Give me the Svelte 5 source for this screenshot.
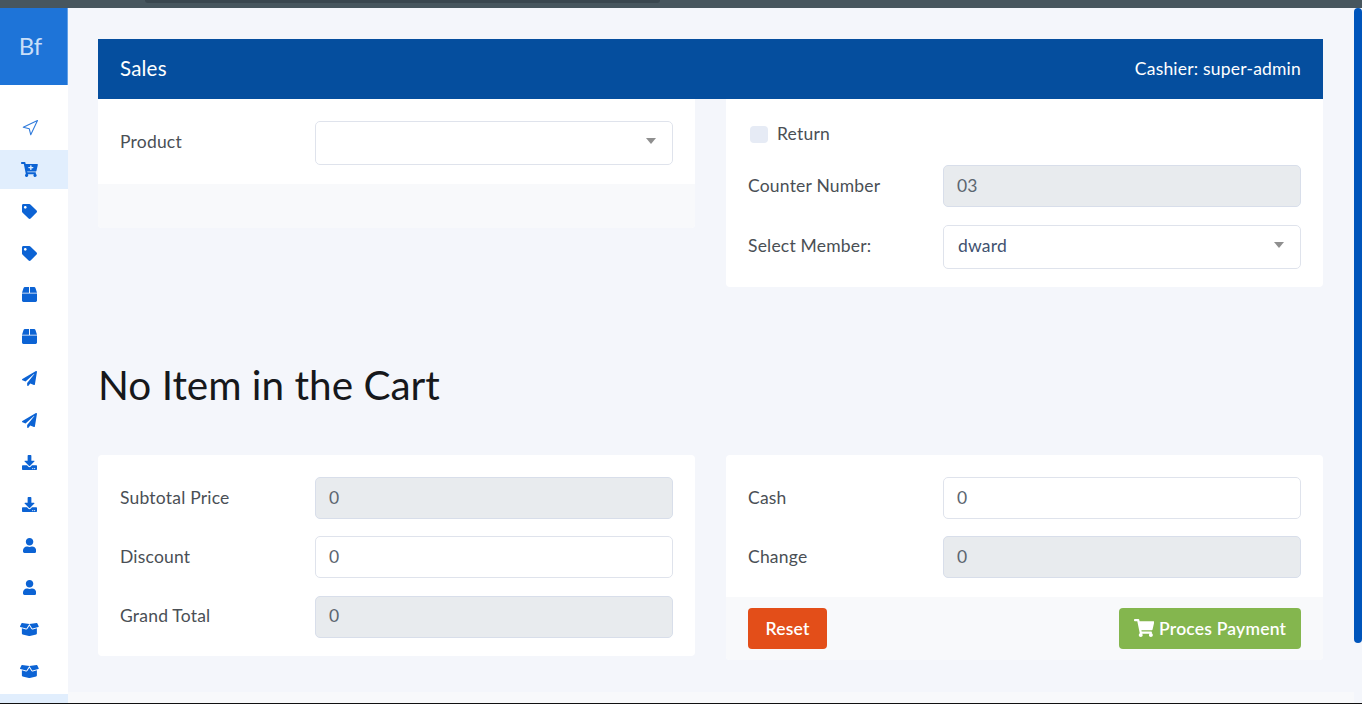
<script lang="ts">
	const icons = {
		tag: { box: '0 0 512 512', d: 'M0 252.118V48C0 21.49 21.49 0 48 0h204.118a48 48 0 0 1 33.941 14.059l211.882 211.882c18.745 18.745 18.745 49.137 0 67.882L293.823 497.941c-18.745 18.745-49.137 18.745-67.882 0L14.059 286.059A48 48 0 0 1 0 252.118zM112 64c-26.51 0-48 21.49-48 48s21.49 48 48 48 48-21.49 48-48-21.49-48-48-48z' },
		cartPlus: { box: '0 0 576 512', d: 'M504.717 320H211.572l6.545 32h268.418c15.401 0 26.816 14.301 23.403 29.319l-5.517 24.276C523.112 414.668 536 433.828 536 456c0 31.202-25.519 56.573-56.834 55.994-29.835-.552-54.371-24.764-55.154-54.594-.428-16.295 6.101-31.061 16.889-41.4H231.1c10.444 10.162 16.9 24.387 16.9 40 0 31.776-26.401 57.42-58.404 56-28.691-1.27-52.126-24.42-53.564-53.103-1.11-22.157 10.535-41.688 28.237-51.897L96.53 64H24C10.745 64 0 53.255 0 40V24C0 10.745 10.745 0 24 0h102.529c11.401 0 21.228 8.021 23.513 19.19L159.208 64H551.99c15.401 0 26.816 14.301 23.403 29.319l-47.273 208C525.637 312.246 515.923 320 504.717 320zM408 168h-48v-40c0-8.837-7.163-16-16-16h-16c-8.837 0-16 7.163-16 16v40h-48c-8.837 0-16 7.163-16 16v16c0 8.837 7.163 16 16 16h48v40c0 8.837 7.163 16 16 16h16c8.837 0 16-7.163 16-16v-40h48c8.837 0 16-7.163 16-16v-16c0-8.837-7.163-16-16-16z' },
		box: { box: '0 0 512 512', d: 'M509.5 184.6L458.9 32.8C452.4 13.2 434.1 0 413.4 0H272v192h238.7c-.4-2.5-.4-5-1.2-7.4zM240 0H98.6c-20.7 0-39 13.2-45.5 32.8L2.5 184.6c-.8 2.4-.8 4.9-1.2 7.4H240V0zM0 224v240c0 26.5 21.5 48 48 48h416c26.5 0 48-21.5 48-48V224H0z' },
		plane: { box: '0 0 512 512', d: 'M476 3.2L12.5 270.6c-18.1 10.4-15.8 35.6 2.2 43.2L121 358.4l287.3-253.2c5.5-4.9 13.3 2.6 8.6 8.3L176 407v80.5c0 23.6 28.5 32.9 42.5 15.8L282 426l124.6 52.2c14.2 6 30.4-2.9 33-18.2l72-432C515 7.8 493.3-6.8 476 3.2z' },
		download: { box: '0 0 512 512', d: 'M216 0h80c13.3 0 24 10.7 24 24v168h87.7c17.8 0 26.7 21.5 14.1 34.1L269.7 378.3c-7.5 7.5-19.8 7.5-27.3 0L90.1 226.1c-12.6-12.6-3.7-34.1 14.1-34.1H192V24c0-13.3 10.7-24 24-24zm296 376v112c0 13.3-10.7 24-24 24H24c-13.3 0-24-10.7-24-24V376c0-13.3 10.7-24 24-24h146.7l49 49c20.1 20.1 52.5 20.1 72.6 0l49-49H488c13.3 0 24 10.7 24 24zm-124 88c0-11-9-20-20-20s-20 9-20 20 9 20 20 20 20-9 20-20zm64 0c0-11-9-20-20-20s-20 9-20 20 9 20 20 20 20-9 20-20z' },
		user: { box: '0 0 448 512', d: 'M224 256c70.7 0 128-57.3 128-128S294.7 0 224 0 96 57.3 96 128s57.3 128 128 128zm89.6 32h-16.7c-22.2 10.2-46.9 16-72.9 16s-50.6-5.8-72.9-16h-16.7C60.2 288 0 348.2 0 422.4V464c0 26.5 21.5 48 48 48h352c26.5 0 48-21.5 48-48v-41.6c0-74.2-60.2-134.4-134.4-134.4z' },
		boxOpen: { box: '0 0 640 512', d: 'M425.7 256c-16.9 0-32.8-9-41.4-23.4L320 126l-64.2 106.6c-8.7 14.5-24.6 23.5-41.5 23.5-4.5 0-9-.6-13.3-1.9L64 215v178c0 14.7 10 27.5 24.2 31l216.2 54.1c10.2 2.5 20.9 2.5 31 0L551.8 424c14.2-3.6 24.2-16.4 24.2-31V215l-137 39.1c-4.3 1.3-8.8 1.9-13.3 1.9zm212.6-112.2L586.8 41c-3.1-6.2-9.8-9.8-16.7-8.9L320 64l91.7 152.1c3.8 6.3 11.4 9.3 18.5 7.3l197.9-56.5c9.9-2.9 14.7-13.9 10.2-23.1zM53.2 41L1.7 143.8c-4.6 9.2.3 20.2 10.1 23l197.9 56.5c7.1 2 14.7-1 18.5-7.3L320 64 69.8 32.1c-6.9-.8-13.5 2.7-16.6 8.9z' },
		cart: { box: '0 0 576 512', d: 'M528.12 301.319l47.273-208C578.806 78.301 567.391 64 551.99 64H159.208l-9.166-44.81C147.758 8.021 137.93 0 126.529 0H24C10.745 0 0 10.745 0 24v16c0 13.255 10.745 24 24 24h69.883l70.248 343.435C147.325 417.1 136 435.222 136 456c0 30.928 25.072 56 56 56s56-25.072 56-56c0-15.674-6.447-29.835-16.824-40h209.647C430.447 426.165 424 440.326 424 456c0 30.928 25.072 56 56 56s56-25.072 56-56c0-22.172-12.888-41.332-31.579-50.405l5.517-24.276c3.413-15.018-8.002-29.319-23.403-29.319H218.117l-6.545-32h293.145c11.206 0 20.92-7.754 23.403-18.681z' }
	};

	const nav = ['cartPlus', 'tag', 'tag', 'box', 'box', 'plane', 'plane', 'download', 'download', 'user', 'user', 'boxOpen', 'boxOpen'] as const;
</script>

<div class="screen">
	<div class="browser-top"><div class="browser-tab"></div></div>

	<div class="shell">
		<aside class="sidebar">
			<div class="logo"><span>Bf</span></div>
			<nav class="menu">
				<a class="item" href="#home">
					<svg class="nav-outline" viewBox="0 0 24 24" fill="none" stroke="currentColor" stroke-width="1.4" stroke-linejoin="round"><polygon points="3 11 22 2 13 21 11 13 3 11" /></svg>
				</a>
				{#each nav as name, i}
					<a class="item" class:active={i === 0} href="#item">
						<svg class="nav-icon" viewBox={icons[name].box} fill="currentColor"><path d={icons[name].d} /></svg>
					</a>
				{/each}
				<div class="item active"></div>
			</nav>
		</aside>

		<main class="main">
			<div class="content">
				<header class="bar">
					<span class="title">Sales</span>
					<span class="cashier">Cashier: super-admin</span>
				</header>

				<div class="columns top">
					<section class="card">
						<div class="card-body product">
							<div class="field raised">
								<label for="product">Product</label>
								<div class="select" id="product"><span></span><i class="caret"></i></div>
							</div>
						</div>
						<div class="card-foot empty"></div>
					</section>

					<section class="card">
						<div class="card-body member">
							<div class="check">
								<span class="box"></span>
								<span class="check-label">Return</span>
							</div>
							<div class="field">
								<label for="counter">Counter Number</label>
								<div class="input disabled" id="counter">03</div>
							</div>
							<div class="field raised">
								<label for="member">Select Member:</label>
								<div class="select" id="member"><span>dward</span><i class="caret"></i></div>
							</div>
						</div>
					</section>
				</div>

				<h1>No Item in the Cart</h1>

				<div class="columns bottom">
					<section class="card totals">
						<div class="card-body stack">
							<div class="field">
								<label for="subtotal">Subtotal Price</label>
								<div class="input disabled" id="subtotal">0</div>
							</div>
							<div class="field">
								<label for="discount">Discount</label>
								<div class="input" id="discount">0</div>
							</div>
							<div class="field">
								<label for="grand">Grand Total</label>
								<div class="input disabled" id="grand">0</div>
							</div>
						</div>
					</section>

					<section class="card">
						<div class="card-body stack pay">
							<div class="field">
								<label for="cash">Cash</label>
								<div class="input" id="cash">0</div>
							</div>
							<div class="field">
								<label for="change">Change</label>
								<div class="input disabled" id="change">0</div>
							</div>
						</div>
						<div class="card-foot actions">
							<button type="button" class="btn reset">Reset</button>
							<button type="button" class="btn process">
								<svg class="btn-icon" viewBox={icons.cart.box} fill="currentColor"><path d={icons.cart.d} /></svg>
								Proces Payment
							</button>
						</div>
					</section>
				</div>
			</div>
			<div class="page-foot"></div>
		</main>

		<div class="scrollbar"><div class="thumb"></div></div>
	</div>
	<div class="edge"></div>
</div>

<style>
	:global(body) {
		margin: 0;
		overflow: hidden;
	}

	.screen {
		height: 704px;
		display: flex;
		flex-direction: column;
		font-family: Lato, 'Noto Sans', sans-serif;
		font-size: 17.5px;
		letter-spacing: 0.2px;
		color: #4a4f55;
		background: #f4f6fb;
		overflow: hidden;
	}

	.browser-top {
		height: 8px;
		flex: none;
		background: #47565e;
	}

	.browser-tab {
		width: 515px;
		height: 3px;
		margin-left: 145px;
		background: #3a474f;
		border-radius: 0 0 6px 6px;
	}

	.shell {
		flex: 1;
		min-height: 0;
		display: flex;
	}

	.sidebar {
		width: 68px;
		flex: none;
		background: #fff;
		display: flex;
		flex-direction: column;
	}

	.logo {
		height: 77px;
		flex: none;
		display: flex;
		align-items: center;
		justify-content: center;
		padding: 0 6px 3px 0;
		box-sizing: border-box;
		background: #1e74d8;
		border-right: 1px solid #62a0e6;
		color: #c9dff8;
		font-size: 24px;
		letter-spacing: 0;
	}

	.menu {
		padding-top: 23px;
		display: flex;
		flex-direction: column;
		gap: 2.85px;
	}

	.item {
		height: 39px;
		flex: none;
		display: flex;
		align-items: center;
		justify-content: center;
		padding-right: 9px;
		color: #0c63d4;
	}

	.item.active {
		background: #e1eefd;
	}

	.nav-icon {
		height: 15px;
	}

	.nav-outline {
		width: 18px;
		height: 18px;
		color: #2f7adb;
	}

	.main {
		flex: 1;
		min-width: 0;
		display: flex;
		flex-direction: column;
	}

	.content {
		flex: 1;
		padding: 31px 31px 0 30px;
	}

	.page-foot {
		height: 11px;
		flex: none;
		background: #f8f9fb;
	}

	.scrollbar {
		width: 8px;
		flex: none;
	}

	.thumb {
		height: 635px;
		background: #0055bb;
		border-radius: 4px;
	}

	.edge {
		height: 1px;
		flex: none;
		background: #111;
	}

	.bar {
		height: 60px;
		box-sizing: border-box;
		display: flex;
		align-items: center;
		justify-content: space-between;
		padding: 0 22px;
		background: #054e9e;
		color: #fff;
	}

	.title {
		font-size: 20.5px;
		padding-bottom: 3px;
	}

	.cashier {
		padding-bottom: 2px;
	}

	.columns {
		display: grid;
		grid-template-columns: 597px 597px;
		gap: 31px;
		align-items: start;
	}

	.card {
		background: #fff;
		border-radius: 4px;
		overflow: hidden;
	}

	.top .card {
		border-radius: 0 0 4px 4px;
	}

	.card-body {
		padding: 22px;
		display: flex;
		flex-direction: column;
	}

	.product {
		padding: 22px 22px 19px;
	}

	.member {
		padding: 26px 22px 18px;
		gap: 18px;
	}

	.stack {
		gap: 17.4px;
	}

	.totals {
		height: 201px;
	}

	.pay {
		padding-bottom: 18.6px;
	}

	.card-foot {
		background: #f8f9fb;
	}

	.empty {
		height: 44px;
	}

	.actions {
		height: 63px;
		box-sizing: border-box;
		padding: 11px 22px 0;
		display: flex;
		justify-content: space-between;
		align-items: flex-start;
	}

	.field {
		display: grid;
		grid-template-columns: 195px 1fr;
		align-items: center;
	}

	.field label {
		padding-bottom: 2px;
	}

	.raised label {
		padding-bottom: 4px;
	}

	.input,
	.select {
		box-sizing: border-box;
		height: 42px;
		display: flex;
		align-items: center;
		padding: 0 13px 2px;
		border: 1px solid #dfe3ec;
		border-radius: 5px;
		background: #fff;
		color: #5c6670;
	}

	.input.disabled {
		background: #e8ebee;
		border-color: #d8deea;
	}

	.select {
		height: 44px;
		justify-content: space-between;
		padding: 0 16px 4px 14px;
		color: #3f5270;
	}

	.caret {
		width: 0;
		height: 0;
		border-left: 5px solid transparent;
		border-right: 5px solid transparent;
		border-top: 6px solid #8f8f8f;
	}

	.check {
		display: flex;
		align-items: center;
		gap: 9px;
		height: 18px;
		padding-left: 2px;
		margin-bottom: 4px;
	}

	.check-label {
		padding-bottom: 1px;
	}

	.box {
		width: 18px;
		height: 17px;
		border-radius: 4px;
		background: #e6ebf5;
	}

	h1 {
		margin: 0;
		height: 168px;
		box-sizing: border-box;
		padding: 74px 0 0;
		font-size: 40.5px;
		line-height: 48px;
		font-weight: 400;
		letter-spacing: 0;
		color: #16181b;
	}

	.btn {
		height: 41px;
		display: inline-flex;
		align-items: center;
		justify-content: center;
		gap: 5px;
		border: none;
		border-radius: 4px;
		color: #fff;
		font-family: inherit;
		font-size: 17.5px;
		letter-spacing: 0.2px;
		font-weight: 600;
	}

	.reset {
		width: 79px;
		background: #e34e19;
	}

	.process {
		width: 182px;
		background: #84b64e;
	}

	.btn-icon {
		height: 18px;
	}
</style>
